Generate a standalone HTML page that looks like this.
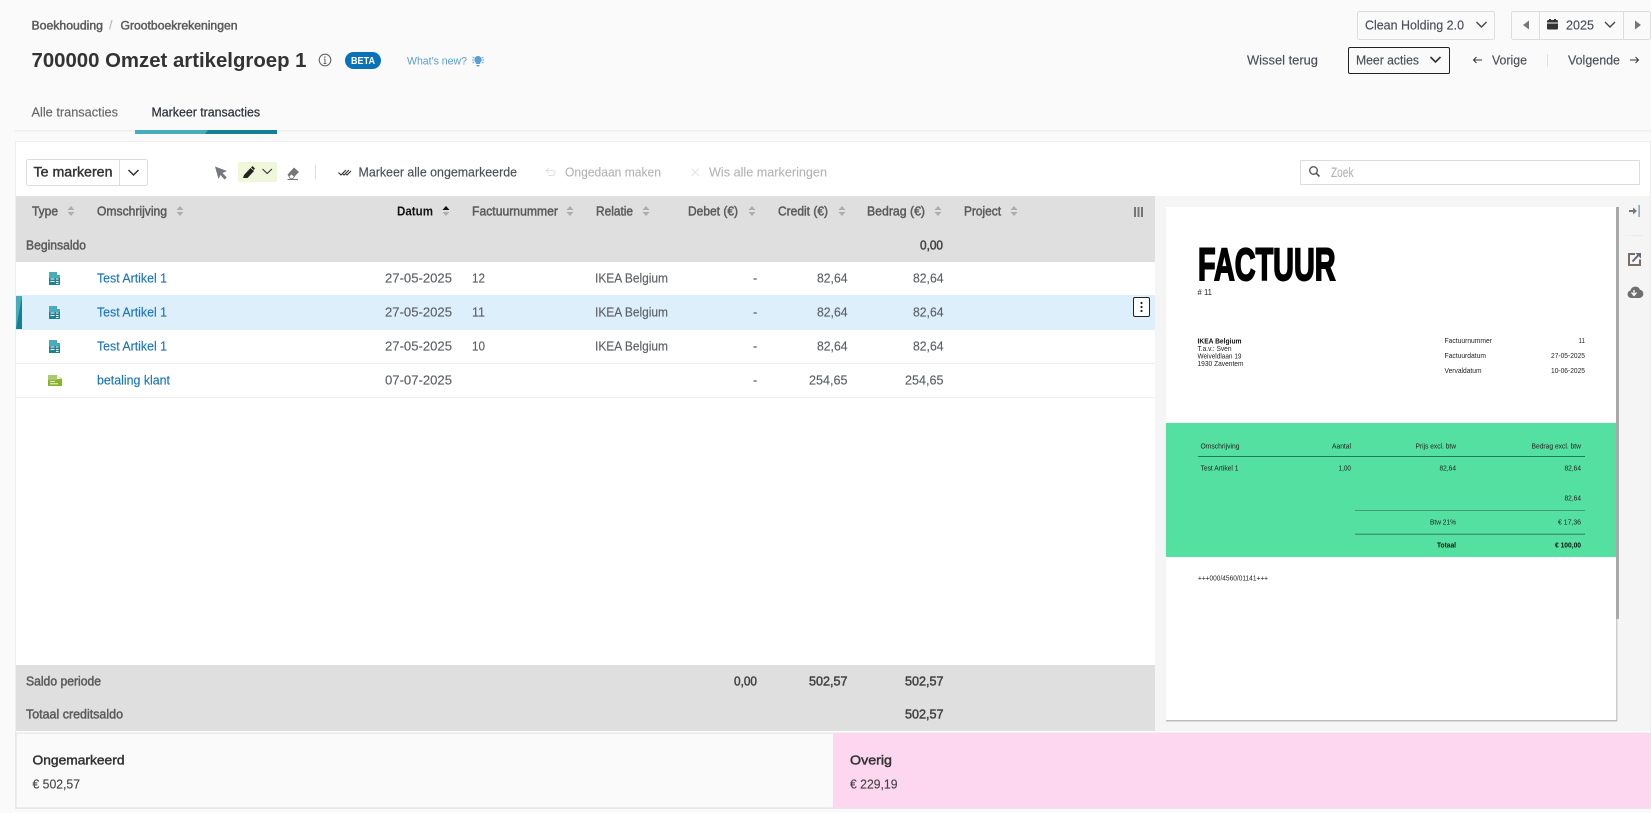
<!DOCTYPE html>
<html lang="nl"><head><meta charset="utf-8"><title>Markeer transacties</title>
<style>
html,body{margin:0;padding:0;background:#fafafa;width:1651px;height:813px;overflow:hidden}
svg{display:block;position:absolute;left:0;top:0}
text{font-family:"Liberation Sans",sans-serif;font-size:12.5px;fill:#4a4f57;stroke:#4a4f57;stroke-width:.15}
.h{stroke:#5a5a5a;stroke-width:.45;fill:#5a5a5a}
.b{stroke:#444;stroke-width:.5;fill:#444}
.l{fill:#1b75bb;stroke:#1b75bb}
.d{fill:#5d6167;stroke:#5d6167}
.g{fill:#b3b3b3;stroke:#b3b3b3;stroke-width:.1}
.p{font-size:7.5px;fill:#222;stroke:none}
</style></head><body>
<svg width="1651" height="813" viewBox="0 0 1651 813" xmlns="http://www.w3.org/2000/svg">
<defs>
<g id="s"><path d="M-3.5 -1 L0 -5 L3.5 -1Z M-3.5 1 L0 5 L3.5 1Z" fill="#adadad"/></g>
<g id="doc"><path d="M0 0H7.5L11 3.5V13H0Z" fill="#1a8396"/><path d="M0 0H7.5L8 3L11 3.5V6H0Z" fill="#4aabb9"/><path d="M8 0L11 3H8Z" fill="#fff"/><path d="M1.5 7H5.5M1.5 9.5H5.5M7 7H9.5M7 9.5H9.5M7 11.5H9.5" stroke="#fff" stroke-width=".9"/></g>
<linearGradient id="mk" x1="0" y1="0" x2="1" y2="1"><stop offset=".48" stop-color="#48adba"/><stop offset=".52" stop-color="#148094"/></linearGradient>
</defs>
<rect width="1651" height="813" fill="#fafafa"/>

<!-- header -->
<text x="31.5" y="29.5" textLength="71.5" lengthAdjust="spacingAndGlyphs" style="font-size:11.5px" class="h">Boekhouding</text>
<text x="109" y="29.5" class="g">/</text>
<text x="120.5" y="29.5" textLength="117" lengthAdjust="spacingAndGlyphs" style="font-size:11.5px" class="h">Grootboekrekeningen</text>
<text x="31.5" y="67" textLength="275" lengthAdjust="spacingAndGlyphs" style="font-size:20px;font-weight:bold;fill:#333;stroke:none">700000 Omzet artikelgroep 1</text>
<circle cx="325" cy="60" r="5.8" fill="none" stroke="#666" stroke-width="1.1"/><path d="M325 59V63.5M323.6 63.5H326.4M323.8 59H325" stroke="#666" stroke-width="1" fill="none"/><circle cx="325" cy="57" r=".8" fill="#666"/>
<rect x="345" y="52" width="36" height="17" rx="8.5" fill="#0a72b9"/>
<text x="351" y="64" textLength="24" lengthAdjust="spacingAndGlyphs" style="font-size:10px;font-weight:bold;fill:#fff;stroke:none">BETA</text>
<text x="407" y="64.5" textLength="60" lengthAdjust="spacingAndGlyphs" style="font-size:11px;fill:#5a9fd0;stroke:none">What's new?</text>
<path d="M478 56a3.7 3.7 0 0 1 2.2 6.6V64h-4.4v-1.4A3.7 3.7 0 0 1 478 56ZM476.2 65h3.6L478.8 66.5h-1.6Z" fill="#5a9fd0"/><path d="M472.5 57l1.8 1M483.5 57l-1.8 1M472 60h1.8M484 60h-1.8M472.5 63l1.8-1M483.5 63l-1.8-1" stroke="#5a9fd0" stroke-width=".9"/>

<text x="31.5" y="116.5" textLength="86.5" lengthAdjust="spacingAndGlyphs" style="fill:#666;stroke:#666">Alle transacties</text>
<text x="151.5" y="116.5" textLength="108.5" lengthAdjust="spacingAndGlyphs" style="fill:#2f343b;stroke:#2f343b;stroke-width:.25">Markeer transacties</text>
<rect x="15" y="130" width="1636" height="1.5" fill="#eeeeee"/>
<rect x="135" y="130" width="142" height="4" fill="#148094"/>
<path d="M135 130H208L205 134H135Z" fill="#48adba"/>

<!-- top right -->
<rect x="1357.5" y="11.5" width="137" height="28" rx="2" fill="#fafafa" stroke="#ddd"/>
<text x="1365" y="29.5" textLength="99" lengthAdjust="spacingAndGlyphs">Clean Holding 2.0</text>
<path d="M1476.5 22l5 5 5-5" fill="none" stroke="#444" stroke-width="1.4"/>
<rect x="1511.5" y="11.5" width="139" height="28" rx="2" fill="#fafafa" stroke="#ddd"/>
<path d="M1539.5 12V39M1623.5 12V39" stroke="#ddd"/>
<path d="M1529 20.5V29.5L1523 25Z" fill="#777"/>
<path d="M1635 20.5V29.5L1641 25Z" fill="#777"/>
<path d="M1547 22.5V21.5Q1547 20 1548.5 20H1549V19H1551V20H1554V19H1556V20H1556.5Q1558 20 1558 21.5V22.5ZM1547 23.5H1558V28.5Q1558 29.5 1557 29.5H1548Q1547 29.5 1547 28.5Z" fill="#333"/>
<text x="1566" y="29.5" textLength="28" lengthAdjust="spacingAndGlyphs">2025</text>
<path d="M1605 22l5 5 5-5" fill="none" stroke="#444" stroke-width="1.4"/>

<text x="1247" y="64.5" textLength="71" lengthAdjust="spacingAndGlyphs">Wissel terug</text>
<rect x="1348.5" y="47.5" width="101" height="26" rx="1.5" fill="#fafafa" stroke="#222" stroke-width="1"/>
<text x="1356" y="64.5" textLength="63" lengthAdjust="spacingAndGlyphs">Meer acties</text>
<path d="M1430.5 57l5 5 5-5" fill="none" stroke="#333" stroke-width="1.6"/>
<path d="M1482 60H1473.5M1476.5 57l-3 3 3 3" fill="none" stroke="#333" stroke-width="1"/>
<text x="1492" y="64.5" textLength="35" lengthAdjust="spacingAndGlyphs">Vorige</text>
<rect x="1547" y="54" width="1" height="13" fill="#e2e2e2"/>
<text x="1568" y="64.5" textLength="52" lengthAdjust="spacingAndGlyphs">Volgende</text>
<path d="M1630 60H1638.5M1635.5 57l3 3-3 3" fill="none" stroke="#333" stroke-width="1"/>

<!-- card -->
<rect x="15.5" y="141.5" width="1635" height="667" fill="#fff" stroke="#eeeeee"/>

<!-- toolbar -->
<rect x="26.5" y="159.5" width="121" height="26" rx="2" fill="#fff" stroke="#ddd"/>
<rect x="119" y="160" width="1" height="25" fill="#ddd"/>
<text x="33.5" y="176.5" textLength="79" lengthAdjust="spacingAndGlyphs" style="font-size:13.5px;fill:#333;stroke:#333;stroke-width:.4">Te markeren</text>
<path d="M128.5 170l5 5 5-5" fill="none" stroke="#333" stroke-width="1.5"/>
<path d="M215 166.5L227 171 222.5 173 226.8 177.5 224.5 179.5 220.5 175 218.5 179Z" fill="#74777b"/>
<rect x="238" y="162" width="39" height="20" rx="1.5" fill="#eef7d9"/>
<path d="M243 178l1-3 6.5-7 3.500 3-6.500 7Z" fill="#222"/><path d="M251 167.500l1.500-1.500 2.500 2.500-1.200 1.500Z" fill="#222"/>
<path d="M262.5 169l4.700 4.500 4.700-4.500" fill="none" stroke="#333" stroke-width="1.1"/>
<path d="M287.5 174.500L294 167.500 299 172 292.500 178.500H290Z" fill="#777"/><path d="M289 176.500l2.200-2.700 3.300 2.700-1.600 2H290.300Z" fill="#fff" stroke="#777" stroke-width=".8"/><path d="M287.500 179.500H298" stroke="#777"/>
<rect x="315" y="165" width="1" height="14" fill="#ddd"/>
<path d="M338.500 172.500l2.500 2.500 5-5M342.500 173.500l1.500 1.500 5-5M346 174l1 1 4-4" fill="none" stroke="#333" stroke-width="1.1"/>
<text x="358.5" y="176.5" textLength="158.5" lengthAdjust="spacingAndGlyphs">Markeer alle ongemarkeerde</text>
<path d="M549 168l-3 2.500 3 2.500M546 170.500H552.500Q555 170.500 555 173T552.500 175.500H548" fill="none" stroke="#e2e2e2" stroke-width="1"/>
<text x="565" y="176.5" textLength="96" lengthAdjust="spacingAndGlyphs" class="g">Ongedaan maken</text>
<path d="M691.5 168.500l7.500 7.500M699 168.500l-7.500 7.500" stroke="#e2e2e2" stroke-width="1"/>
<text x="709" y="176.5" textLength="118" lengthAdjust="spacingAndGlyphs" class="g">Wis alle markeringen</text>
<rect x="1300.5" y="160.5" width="339" height="24" fill="#fff" stroke="#ddd"/>
<circle cx="1313.5" cy="170.5" r="3.8" fill="none" stroke="#555" stroke-width="1.4"/><path d="M1316.300 173.300l3.200 3.200" stroke="#555" stroke-width="1.6"/>
<text x="1331" y="177" textLength="22.5" lengthAdjust="spacingAndGlyphs" class="g" style="font-size:13.5px">Zoek</text>

<!-- table head -->
<rect x="16" y="196" width="1139" height="66" fill="#dfdfdf"/>
<g>
<text x="32" y="215.5" textLength="26" lengthAdjust="spacingAndGlyphs" class="h">Type</text><use href="#s" x="71" y="211"/>
<text x="97" y="215.5" textLength="70" lengthAdjust="spacingAndGlyphs" class="h">Omschrijving</text><use href="#s" x="180" y="211"/>
<text x="397" y="215.5" textLength="36" lengthAdjust="spacingAndGlyphs" style="fill:#111;stroke:none;font-weight:bold">Datum</text><use href="#s" x="446" y="211"/><path d="M442.5 210L446 206 449.5 210Z" fill="#111"/>
<text x="472" y="215.5" textLength="86" lengthAdjust="spacingAndGlyphs" class="h">Factuurnummer</text><use href="#s" x="570" y="211"/>
<text x="596" y="215.5" textLength="37" lengthAdjust="spacingAndGlyphs" class="h">Relatie</text><use href="#s" x="646" y="211"/>
<text x="688" y="215.5" textLength="50" lengthAdjust="spacingAndGlyphs" class="h">Debet (€)</text><use href="#s" x="752" y="211"/>
<text x="778" y="215.5" textLength="50" lengthAdjust="spacingAndGlyphs" class="h">Credit (€)</text><use href="#s" x="842" y="211"/>
<text x="867" y="215.5" textLength="58" lengthAdjust="spacingAndGlyphs" class="h">Bedrag (€)</text><use href="#s" x="938" y="211"/>
<text x="964" y="215.5" textLength="37" lengthAdjust="spacingAndGlyphs" class="h">Project</text><use href="#s" x="1014" y="211"/>
</g>
<path d="M1134 207H1136V217H1134ZM1137.500 207H1139.500V217H1137.500ZM1141 207H1143V217H1141Z" fill="#777"/>
<text x="26" y="249.5" textLength="60" lengthAdjust="spacingAndGlyphs" class="h">Beginsaldo</text>
<text x="920" y="249.5" textLength="23" lengthAdjust="spacingAndGlyphs" class="b">0,00</text>

<!-- rows -->
<rect x="16" y="295" width="1139" height="35" fill="#deeffc"/>
<rect x="16" y="296" width="6" height="33" fill="url(#mk)"/>
<rect x="16" y="363" width="1139" height="1" fill="#eee"/>
<rect x="16" y="397" width="1139" height="1" fill="#eee"/>

<use href="#doc" x="49" y="272"/><use href="#doc" x="49" y="306"/><use href="#doc" x="49" y="340"/>
<g>
<path d="M48 375H57L62 379V386H48Z" fill="#86b52a"/><path d="M48 375H57L58 380H48Z" fill="#a9c96b"/><path d="M57 375L61 379H57Z" fill="#fff"/><path d="M50 381.500H55M50 383.800H58" stroke="#fff" stroke-width=".8"/>
</g>

<text x="97" y="282.5" textLength="70" lengthAdjust="spacingAndGlyphs" class="l">Test Artikel 1</text>
<text x="385" y="282.5" textLength="67" lengthAdjust="spacingAndGlyphs" class="d">27-05-2025</text>
<text x="472" y="282.5" textLength="13" lengthAdjust="spacingAndGlyphs" class="d">12</text>
<text x="595" y="282.5" textLength="73" lengthAdjust="spacingAndGlyphs" class="d">IKEA Belgium</text>
<text x="753" y="282.5" class="d">-</text>
<text x="817" y="282.5" textLength="30.5" lengthAdjust="spacingAndGlyphs" class="d">82,64</text>
<text x="913" y="282.5" textLength="30.5" lengthAdjust="spacingAndGlyphs" class="d">82,64</text>

<text x="97" y="316.5" textLength="70" lengthAdjust="spacingAndGlyphs" class="l">Test Artikel 1</text>
<text x="385" y="316.5" textLength="67" lengthAdjust="spacingAndGlyphs" class="d">27-05-2025</text>
<text x="472" y="316.5" textLength="13" lengthAdjust="spacingAndGlyphs" class="d">11</text>
<text x="595" y="316.5" textLength="73" lengthAdjust="spacingAndGlyphs" class="d">IKEA Belgium</text>
<text x="753" y="316.5" class="d">-</text>
<text x="817" y="316.5" textLength="30.5" lengthAdjust="spacingAndGlyphs" class="d">82,64</text>
<text x="913" y="316.5" textLength="30.5" lengthAdjust="spacingAndGlyphs" class="d">82,64</text>
<rect x="1133.5" y="297.5" width="16" height="19" rx="1.5" fill="#fff" stroke="#222"/>
<circle cx="1141.5" cy="303" r="1.1" fill="#222"/><circle cx="1141.5" cy="307" r="1.1" fill="#222"/><circle cx="1141.5" cy="311" r="1.1" fill="#222"/>

<text x="97" y="350.5" textLength="70" lengthAdjust="spacingAndGlyphs" class="l">Test Artikel 1</text>
<text x="385" y="350.5" textLength="67" lengthAdjust="spacingAndGlyphs" class="d">27-05-2025</text>
<text x="472" y="350.5" textLength="13" lengthAdjust="spacingAndGlyphs" class="d">10</text>
<text x="595" y="350.5" textLength="73" lengthAdjust="spacingAndGlyphs" class="d">IKEA Belgium</text>
<text x="753" y="350.5" class="d">-</text>
<text x="817" y="350.5" textLength="30.5" lengthAdjust="spacingAndGlyphs" class="d">82,64</text>
<text x="913" y="350.5" textLength="30.5" lengthAdjust="spacingAndGlyphs" class="d">82,64</text>

<text x="97" y="384.5" textLength="73" lengthAdjust="spacingAndGlyphs" class="l">betaling klant</text>
<text x="385" y="384.5" textLength="67" lengthAdjust="spacingAndGlyphs" class="d">07-07-2025</text>
<text x="753" y="384.5" class="d">-</text>
<text x="809" y="384.5" textLength="38.5" lengthAdjust="spacingAndGlyphs" class="d">254,65</text>
<text x="905" y="384.5" textLength="38.5" lengthAdjust="spacingAndGlyphs" class="d">254,65</text>

<!-- table foot -->
<rect x="16" y="665" width="1139" height="66" fill="#dfdfdf"/>
<text x="26" y="685.5" textLength="75" lengthAdjust="spacingAndGlyphs" class="h">Saldo periode</text>
<text x="734" y="685.5" textLength="23" lengthAdjust="spacingAndGlyphs" class="b">0,00</text>
<text x="809" y="685.5" textLength="38.5" lengthAdjust="spacingAndGlyphs" class="b">502,57</text>
<text x="905" y="685.5" textLength="38.5" lengthAdjust="spacingAndGlyphs" class="b">502,57</text>
<text x="26" y="718.5" textLength="97" lengthAdjust="spacingAndGlyphs" class="h">Totaal creditsaldo</text>
<text x="905" y="718.5" textLength="38.5" lengthAdjust="spacingAndGlyphs" class="b">502,57</text>

<!-- preview -->
<rect x="1155" y="196" width="495" height="535" fill="#f5f5f5"/>
<rect x="1616" y="207" width="1.5" height="514" fill="#cccccc"/>
<rect x="1166" y="720" width="451" height="1.5" fill="#bdbdbd"/>
<rect x="1166" y="207" width="450" height="513" fill="#fff"/>
<rect x="1616" y="207" width="3" height="412" fill="#a9a9a9"/>
<text transform="translate(1198 280) scale(.64 1)" x="0" y="0" style="font-size:45px;font-weight:bold;fill:#000;stroke:#000;stroke-width:1.9">FACTUUR</text>
<text x="1197.5" y="295" textLength="14.5" lengthAdjust="spacingAndGlyphs" class="p" style="font-size:8.5px"># 11</text>

<text x="1197.5" y="343.500" textLength="44" lengthAdjust="spacingAndGlyphs" class="p" style="font-weight:bold;fill:#111">IKEA Belgium</text>
<text x="1197.5" y="351" textLength="34" lengthAdjust="spacingAndGlyphs" class="p">T.a.v.: Sven</text>
<text x="1197.5" y="358.500" textLength="44" lengthAdjust="spacingAndGlyphs" class="p">Weiveldlaan 19</text>
<text x="1197.5" y="366" textLength="46" lengthAdjust="spacingAndGlyphs" class="p">1930 Zaventem</text>

<text x="1444.5" y="343" textLength="47.5" lengthAdjust="spacingAndGlyphs" class="p">Factuurnummer</text>
<text x="1444.5" y="358" textLength="41.5" lengthAdjust="spacingAndGlyphs" class="p">Factuurdatum</text>
<text x="1444.5" y="373" textLength="37" lengthAdjust="spacingAndGlyphs" class="p">Vervaldatum</text>
<text x="1578.5" y="343" textLength="6.5" lengthAdjust="spacingAndGlyphs" class="p">11</text>
<text x="1551" y="358" textLength="34" lengthAdjust="spacingAndGlyphs" class="p">27-05-2025</text>
<text x="1551" y="373" textLength="34" lengthAdjust="spacingAndGlyphs" class="p">10-06-2025</text>

<rect x="1166" y="423" width="450" height="134" fill="#54e0a0"/>
<text x="1200.5" y="448.5" textLength="39" lengthAdjust="spacingAndGlyphs" class="p">Omschrijving</text>
<text x="1332" y="448.5" textLength="19" lengthAdjust="spacingAndGlyphs" class="p">Aantal</text>
<text x="1415.5" y="448.5" textLength="40.5" lengthAdjust="spacingAndGlyphs" class="p">Prijs excl. btw</text>
<text x="1531.5" y="448.5" textLength="49.5" lengthAdjust="spacingAndGlyphs" class="p">Bedrag excl. btw</text>
<rect x="1198" y="456" width="387" height="1" fill="#1f7a55"/>
<text x="1200.5" y="470.5" textLength="38" lengthAdjust="spacingAndGlyphs" class="p">Test Artikel 1</text>
<text x="1338.5" y="470.5" textLength="12.5" lengthAdjust="spacingAndGlyphs" class="p">1,00</text>
<text x="1439.5" y="470.5" textLength="16.5" lengthAdjust="spacingAndGlyphs" class="p">82,64</text>
<text x="1564.5" y="470.5" textLength="16.5" lengthAdjust="spacingAndGlyphs" class="p">82,64</text>
<text x="1564.5" y="500.5" textLength="16.5" lengthAdjust="spacingAndGlyphs" class="p">82,64</text>
<rect x="1355" y="510" width="230" height="1" fill="#3f9c74"/>
<text x="1430" y="524.5" textLength="26" lengthAdjust="spacingAndGlyphs" class="p">Btw 21%</text>
<text x="1558" y="524.5" textLength="23" lengthAdjust="spacingAndGlyphs" class="p">€ 17,36</text>
<rect x="1355" y="533.5" width="230" height="1.5" fill="#3f9c74"/>
<text x="1437" y="547.5" textLength="19" lengthAdjust="spacingAndGlyphs" class="p" style="font-weight:bold;fill:#111">Totaal</text>
<text x="1555" y="547.5" textLength="26" lengthAdjust="spacingAndGlyphs" class="p" style="font-weight:bold;fill:#111">€ 100,00</text>
<text x="1198" y="580.5" textLength="70" lengthAdjust="spacingAndGlyphs" class="p">+++000/4560/01141+++</text>

<!-- side icons -->
<path d="M1629 210H1633V207.500L1637 211 1633 214.500V212H1629Z" fill="#777"/><rect x="1638.5" y="205" width="1.2" height="12" fill="#5a8fb8"/>
<rect x="1625" y="235" width="18" height="1" fill="#ebebeb"/>
<path d="M1635 254H1629V265H1640V259.500" fill="none" stroke="#7a6f66" stroke-width="2"/><path d="M1632.500 261.500l6-6.500" stroke="#667" stroke-width="2"/><path d="M1635.500 253H1641V258.500Z" fill="#667"/>
<path d="M1631 298a3.800 3.800 0 0 1-.5-7.500 5 5 0 0 1 9.500-.8 4.200 4.200 0 0 1-.5 8.300Z" fill="#6f6f6f"/><path d="M1634 290v4.500M1631.500 292.500l2.500 3 2.500-3" stroke="#fff" stroke-width="1.300" fill="none"/>

<!-- summary -->
<rect x="16" y="733" width="1634" height="75" fill="#fafafa" stroke="#e0e0e0"/>
<rect x="833" y="733" width="817" height="75" fill="#fdd6f0"/>
<text x="32.5" y="764.5" textLength="92" lengthAdjust="spacingAndGlyphs" style="font-size:13px;fill:#333;stroke:#333;stroke-width:.45">Ongemarkeerd</text>
<text x="32.5" y="788.5" textLength="47.5" lengthAdjust="spacingAndGlyphs" style="fill:#444">€ 502,57</text>
<text x="850" y="764.5" textLength="42" lengthAdjust="spacingAndGlyphs" style="font-size:13px;fill:#333;stroke:#333;stroke-width:.45">Overig</text>
<text x="850" y="788.5" textLength="47.5" lengthAdjust="spacingAndGlyphs" style="fill:#444">€ 229,19</text>
</svg>
</body></html>
